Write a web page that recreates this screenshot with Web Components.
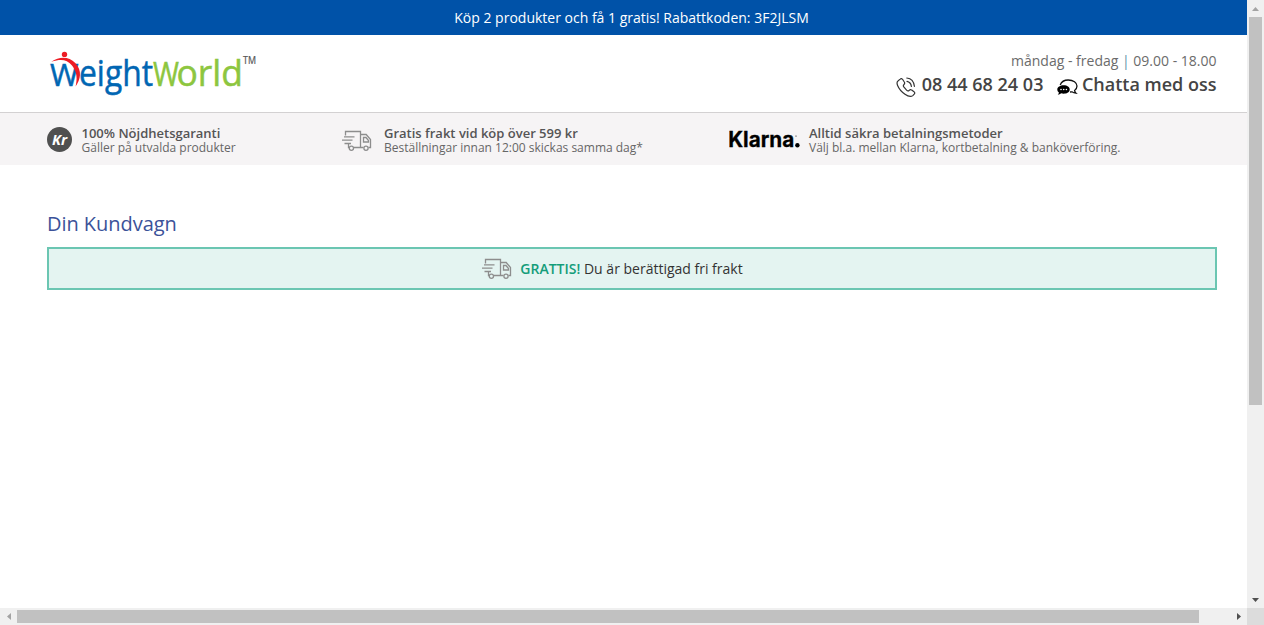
<!DOCTYPE html>
<html lang="sv"><head><meta charset="utf-8"><title>Din Kundvagn</title>
<style>html,body{margin:0;height:100%;overflow:hidden;background:#fff;font-family:"Open Sans","Noto Sans",sans-serif;color:#4a4a4a}</style></head><body>
<cart-page></cart-page>
<script>
function define(name, css, html){
  customElements.define(name, class extends HTMLElement{
    constructor(){super();this.attachShadow({mode:'open'}).innerHTML='<style>*{box-sizing:border-box}svg{display:block;flex:none}'+css+'</style>'+html;}
  });
}
define('promo-bar',':host{display:flex;height:35px;background:#0052a8;color:#fff;font-size:14px;line-height:35px;justify-content:center;padding-left:16px;font-weight:500;letter-spacing:0;white-space:nowrap}','<slot></slot>');
define('brand-logo',':host{display:block}','<svg width="212" height="52" viewBox="0 0 212 52" overflow="visible" font-family="Open Sans"><g stroke-width=".5"><g fill="#0066b3" stroke="#0066b3"><text x="3" y="39" font-size="31" textLength="28.5" lengthAdjust="spacingAndGlyphs">W</text><text x="32" y="39" font-size="36" textLength="74" lengthAdjust="spacingAndGlyphs">eight</text></g><g fill="#8dc63f" stroke="#8dc63f"><text x="106" y="39" font-size="33" textLength="26" lengthAdjust="spacingAndGlyphs">W</text><text x="129.5" y="39" font-size="36.5" textLength="66.5" lengthAdjust="spacingAndGlyphs">orld</text></g></g><text x="196" y="17.3" font-size="10" textLength="13" lengthAdjust="spacingAndGlyphs" fill="#555" stroke="#555" stroke-width=".2">TM</text><circle cx="17.5" cy="7.4" r="2.7" fill="#ed1c24"/><path d="M4.3 14.8C13 8.8 22 9.5 28.3 16C35.5 24 33.5 32.5 28.6 39.5C30.3 32 30.3 25 25 18.5C19.5 12 13.5 12.2 4.3 14.8Z" fill="#ed1c24"/></svg>');
define('phone-icon',':host{display:block}','<svg width="20" height="22" viewBox="0 0 20 22" fill="none" stroke="#333" stroke-width="1.2" stroke-linecap="round" stroke-linejoin="round"><path d="M4.2 3.1C5 2.2 6 2.5 6.7 3.5L8.3 6C9 7 8.8 7.7 8 8.5C7 9.4 7.1 10.1 8 11.2L10.6 14.1C11.7 15.2 12.4 15.2 13.2 14.3C14 13.5 14.8 13.4 15.7 14.1L18 15.8C19 16.5 19 17.3 18.2 18.2L16.8 19.6C15 21 12 20.4 9 18.2C5.8 15.9 3 12.8 1.6 9.4C.6 7 .8 5.7 2.2 4.7Z"/><path d="M11 5.4C13.4 5.9 15 7.8 15.4 10.3M10.8 2C15.2 2.5 17.9 5.8 18.4 10.3"/></svg>');
define('chat-icon',':host{display:block}','<svg width="21" height="17" viewBox="0 0 21 17"><path d="M3.2 6C4.4 2.9 7.3 1 11.2 1C16.3 1 20 3.6 20 7.1C20 9 19.1 10.3 17.6 11.4C17.7 12.7 18.2 13.5 19 14.2C17.3 14.1 15.9 13.5 14.9 12.8L13 13" fill="none" stroke="#111" stroke-width="1.3"/><path d="M6.7 6.3C10.2 6.3 12.7 8 12.7 10.5S10.2 14.7 6.7 14.7C5.7 14.7 4.9 14.6 4.2 14.3C3.3 15.1 2 15.7.8 15.7C1.6 14.9 1.9 14.1 1.9 13.4C.8 12.7.3 11.7.3 10.5C.3 8 3.2 6.3 6.7 6.3Z"/><g fill="#fff"><circle cx="4" cy="10.5" r=".8"/><circle cx="6.7" cy="10.5" r=".8"/><circle cx="9.4" cy="10.5" r=".8"/></g></svg>');
define('truck-icon',':host{display:block}','<svg width="30" height="22" viewBox="0 0 30 22" fill="none" stroke="#8d8d8d" stroke-width="1.3"><path d="M3.5 5.5V1.5H18.5V17.5M18.5 4.5H24.2L28.5 9.5V17.5H26.5M21.5 17.5H12M7.5 17.5H6.5V14.2M21.5 7.5H24L26.5 10.5V12H21.5ZM2 6.8H12.5M0 10.2H10.5M2.5 13.5H9"/><circle cx="9.4" cy="18.3" r="2.1"/><circle cx="24" cy="18.3" r="2.1"/></svg>');
define('kr-icon',':host{display:block}','<svg width="26" height="26" viewBox="0 0 26 26"><circle cx="12.5" cy="12.5" r="12.5" fill="#505050"/><text x="5" y="17.5" font-family="Open Sans" font-size="14" font-weight="700" font-style="italic" fill="#fff" textLength="15" lengthAdjust="spacingAndGlyphs">Kr</text></svg>');
define('klarna-logo',':host{display:block}','<svg width="72" height="24" viewBox="0 0 72 24"><text x="-.8" y="19" font-family="Inter" font-size="21" font-weight="700" stroke="#000" stroke-width=".3" textLength="66" lengthAdjust="spacingAndGlyphs">Klarna</text><circle cx="68.4" cy="17.2" r="2.2"/><circle cx="67" cy="8" r=".6"/></svg>');
define('site-header',':host{display:flex;height:78px;border-bottom:1px solid #d3d1d2;justify-content:space-between;padding:12px 30.5px 0 47px}.r{display:grid;grid-template-rows:25px 24px;justify-items:end;padding-top:1px}.h{font-size:14px;line-height:26px;color:#6b6b6b;white-space:pre}.h i{font-style:normal;color:#5d8fa8}.c{display:flex;font-size:18px;font-weight:600;line-height:23px;color:#444;white-space:nowrap}phone-icon{margin:3px 5.5px 0 0}chat-icon{margin:6px 4px 0 13.5px}','<brand-logo></brand-logo><div class="r"><div class="h">måndag - fredag <i>|</i> 09.00 - 18.00</div><div class="c"><phone-icon></phone-icon><span class="p">08 44 68 24 03</span><chat-icon></chat-icon><span class="m">Chatta med oss</span></div></div>');
define('usp-item',':host{display:flex;white-space:nowrap}.i{width:var(--icon,35px);padding-top:var(--top,0px);margin-left:var(--shift,0px);flex:none}.t{padding-top:13px;line-height:15px}.a{font-size:13px;font-weight:600;color:#555}.b{font-size:12px;color:#666;line-height:14px}','<div class="i"><slot name="icon"></slot></div><div class="t"><div class="a"><slot name="title"></slot></div><div class="b"><slot></slot></div></div>');
define('usp-bar',':host{display:grid;grid-template-columns:296px 386px 1fr;height:52px;background:#f6f4f5;padding-left:47px}usp-item:nth-of-type(1){--top:14px;--icon:34.5px}usp-item:nth-of-type(2){--icon:42px;--shift:-1px;--top:17px}usp-item:nth-of-type(3){--icon:80px;--top:15px}','<usp-item><kr-icon slot="icon"></kr-icon><span slot="title">100% Nöjdhetsgaranti</span>Gäller på utvalda produkter</usp-item><usp-item><truck-icon slot="icon"></truck-icon><span slot="title">Gratis frakt vid köp över 599 kr</span>Beställningar innan 12:00 skickas samma dag*</usp-item><usp-item><klarna-logo slot="icon"></klarna-logo><span slot="title">Alltid säkra betalningsmetoder</span>Välj bl.a. mellan Klarna, kortbetalning &amp; banköverföring.</usp-item>');
define('shipping-notice',':host{display:flex;height:43px;border:2px solid #6bc6b2;background:#e4f4f1;align-items:center;justify-content:center;padding-right:39px;font-size:14px;color:#333;white-space:pre}truck-icon{margin-right:8px}b{font-weight:600;color:#149d7a}','<truck-icon></truck-icon><b>GRATTIS!</b><span> Du är berättigad fri frakt</span>');
define('cart-content',':host{display:block;padding:42px 30px 0 47px}h1{margin:0 0 6px;font-size:20px;line-height:34px;font-weight:400;color:#3b5299;letter-spacing:-.04px}','<h1>Din Kundvagn</h1><shipping-notice></shipping-notice>');
define('scroll-bar',':host{display:flex;background:#f0f0f0}.z{background:#c1c1c1}:host([dir-y]){flex-direction:column}:host([dir-y]) .z{height:388px;margin:0 2px}:host([dir-x]) .z{width:1182px;margin:2px 0}svg{width:17px;height:17px}:host([dir-x]) .first{transform:rotate(-90deg)}:host([dir-x]) .last{transform:rotate(-90deg)}.last{margin-top:auto}:host([dir-x]) .last{margin:0 0 0 auto}','<svg class="first"><path d="M5 11L8.5 7L12 11Z" fill="#a3a3a3"/></svg><div class="z"></div><svg class="last"><path d="M5 7L8.5 11L12 7Z" fill="#505050"/></svg>');
define('cart-page',':host{display:grid;grid-template:608px 17px/1247px 17px;width:1264px;height:625px}main{overflow:hidden}.corner{background:#dcdcdc}','<main><promo-bar>Köp 2 produkter och få 1 gratis! Rabattkoden: 3F2JLSM</promo-bar><site-header></site-header><usp-bar></usp-bar><cart-content></cart-content></main><scroll-bar dir-y></scroll-bar><scroll-bar dir-x></scroll-bar><div class="corner"></div>');
</script></body></html>
